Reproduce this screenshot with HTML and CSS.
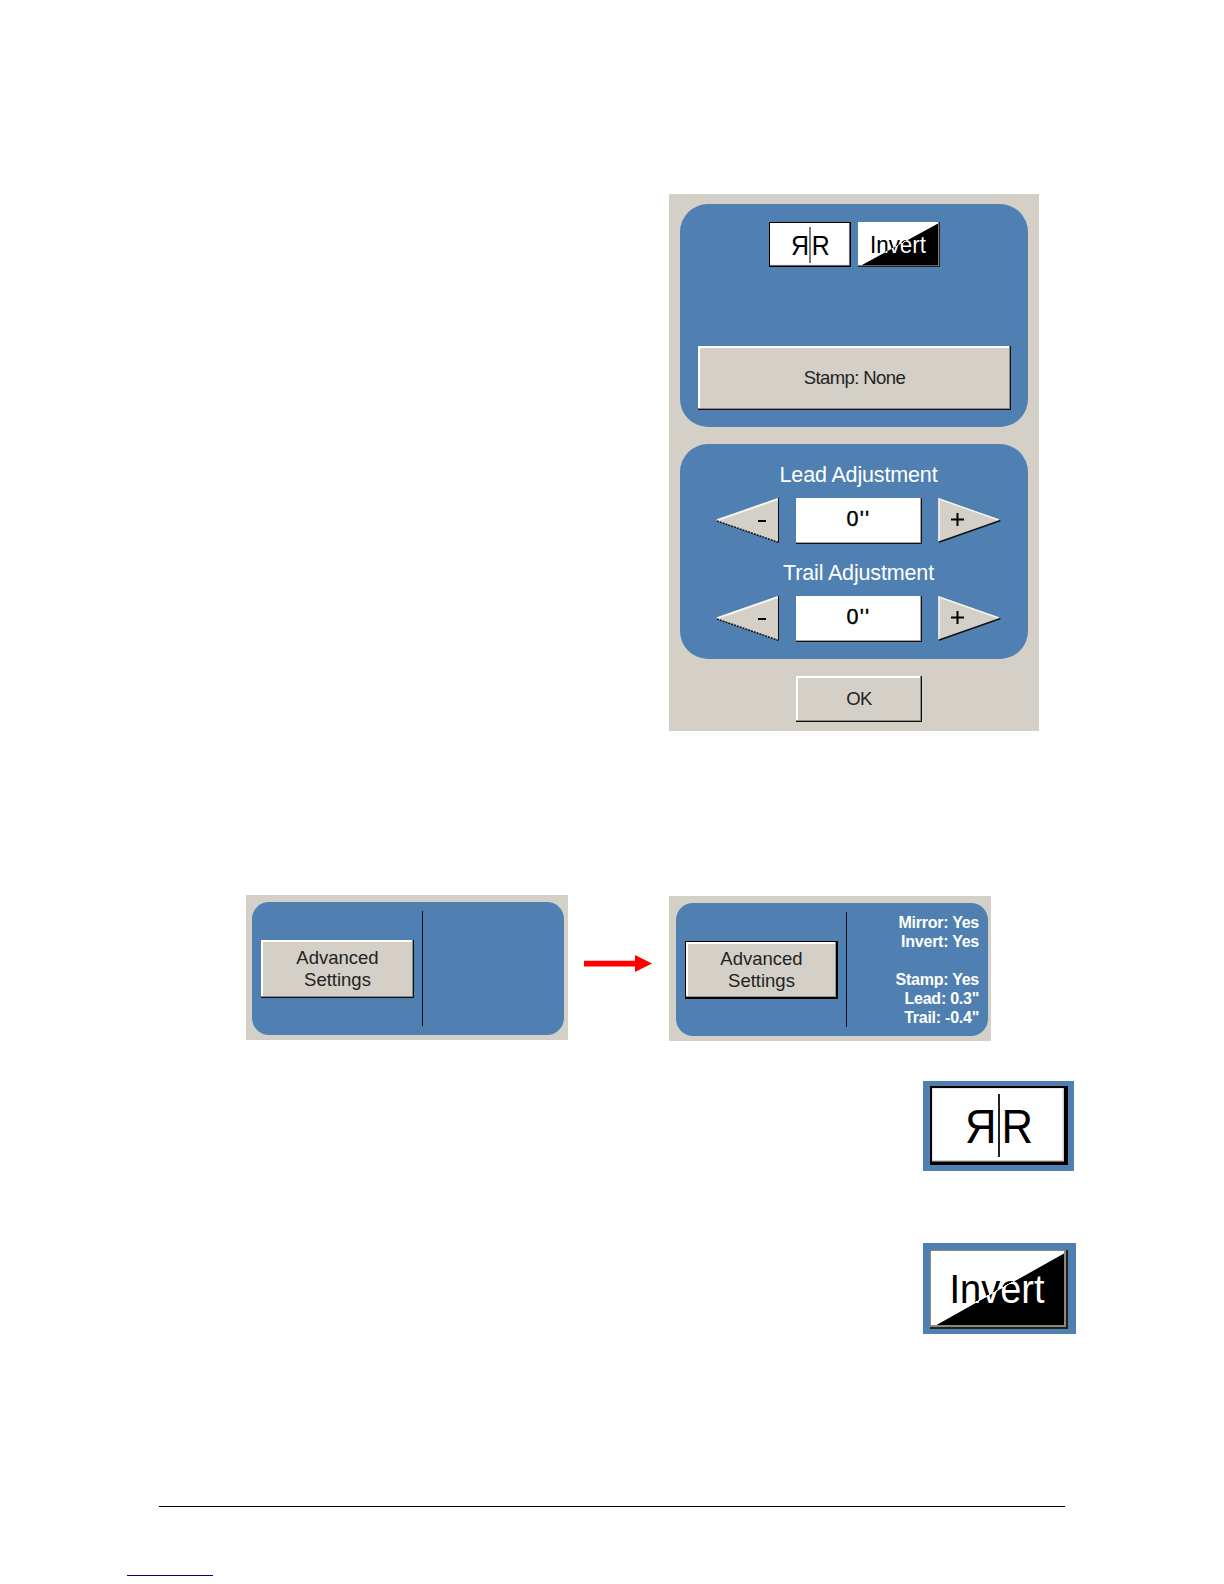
FILE: index.html
```
<!DOCTYPE html>
<html lang="en">
<head>
    <meta charset="UTF-8">
    <meta name="viewport" content="width=device-width, initial-scale=1.0">
    <title>Advanced Settings</title>
    <link rel="stylesheet" href="styles.css">
</head>
<body>
    <main class="page">
        <section class="dialog">
            <div class="panel options">
                <div class="toggles">
                    <svg class="toggle" viewBox="0 0 82 45">
                        <rect width="82" height="45" fill="#000"/>
                        <rect x="1" y="1" width="79.5" height="42.5" fill="#d4d0c8"/>
                        <rect x="1" y="1" width="78.8" height="41.7" fill="#fff"/>
                        <text x="42.7" y="32.6" font-size="27.5" textLength="18" lengthAdjust="spacingAndGlyphs">R</text>
                        <text transform="translate(82 0) scale(-1 1)" x="42" y="32.6" font-size="27.5" textLength="18" lengthAdjust="spacingAndGlyphs">R</text>
                        <rect x="40.4" y="5" width="1.2" height="36" fill="#222"/>
                    </svg>
                    <svg class="toggle" viewBox="0 0 82 45">
                        <defs>
                            <linearGradient id="split" gradientUnits="userSpaceOnUse" x1="30.1" y1="2.7" x2="51.9" y2="42.3">
                                <stop offset="0.5" stop-color="#000"/>
                                <stop offset="0.5" stop-color="#fff"/>
                            </linearGradient>
                        </defs>
                        <rect width="82" height="45" fill="#222"/>
                        <rect width="81" height="44" fill="#857f78"/>
                        <rect width="80" height="43" fill="#fff"/>
                        <path d="M3.5 43.3L80 1.5V43.3Z" fill="#000"/>
                        <text x="12" y="31.2" font-size="23.5" textLength="56" lengthAdjust="spacingAndGlyphs" fill="url(#split)">Invert</text>
                    </svg>
                </div>
                <button class="btn stamp">Stamp: None</button>
            </div>

            <div class="panel adjustments">
                <h3>Lead Adjustment</h3>
                <div class="stepper">
                    <svg class="arrow" viewBox="0 0 63 45">
                        <path d="M0 22.5L62.5 0V44.5Z" fill="#d4d0c8"/>
                        <path d="M1 22.2L62 1" stroke="#f5f3ee" stroke-width="2"/>
                        <path d="M1 23L62.3 44.3" stroke="#111" stroke-width="1.5" stroke-dasharray="2 1"/>
                        <path d="M62.5 0V44.5" stroke="#111"/>
                        <path d="M42 23H50" stroke="#000" stroke-width="2"/>
                    </svg>
                    <div class="value">0''</div>
                    <svg class="arrow" viewBox="0 0 63 45">
                        <path d="M0.5 0L63 22.5L0.5 44.5Z" fill="#d4d0c8"/>
                        <path d="M1 44V1L61 22" fill="none" stroke="#f5f3ee" stroke-width="1.5"/>
                        <path d="M0.5 44.2L62.5 22.5" stroke="#111" stroke-width="1.5"/>
                        <path d="M13 21.5H26M19.5 15V28" stroke="#000" stroke-width="2"/>
                    </svg>
                </div>
                <h3>Trail Adjustment</h3>
                <div class="stepper">
                    <svg class="arrow" viewBox="0 0 63 45">
                        <path d="M0 22.5L62.5 0V44.5Z" fill="#d4d0c8"/>
                        <path d="M1 22.2L62 1" stroke="#f5f3ee" stroke-width="2"/>
                        <path d="M1 23L62.3 44.3" stroke="#111" stroke-width="1.5" stroke-dasharray="2 1"/>
                        <path d="M62.5 0V44.5" stroke="#111"/>
                        <path d="M42 23H50" stroke="#000" stroke-width="2"/>
                    </svg>
                    <div class="value">0''</div>
                    <svg class="arrow" viewBox="0 0 63 45">
                        <path d="M0.5 0L63 22.5L0.5 44.5Z" fill="#d4d0c8"/>
                        <path d="M1 44V1L61 22" fill="none" stroke="#f5f3ee" stroke-width="1.5"/>
                        <path d="M0.5 44.2L62.5 22.5" stroke="#111" stroke-width="1.5"/>
                        <path d="M13 21.5H26M19.5 15V28" stroke="#000" stroke-width="2"/>
                    </svg>
                </div>
            </div>

            <button class="btn ok">OK</button>
        </section>

        <section class="summary">
            <div class="card">
                <div class="panel card-inner">
                    <button class="btn advanced">Advanced<br>Settings</button>
                    <div class="divider"></div>
                </div>
            </div>
            <svg class="red-arrow" viewBox="0 0 68 17">
                <path d="M0 5.8H51V0L68 8.5L51 17V11.4H0Z" fill="#f00"/>
            </svg>
            <div class="card changed">
                <div class="panel card-inner">
                    <button class="btn advanced active">Advanced<br>Settings</button>
                    <div class="divider"></div>
                    <p class="status">Mirror: Yes<br>Invert: Yes<br><br>Stamp: Yes<br>Lead: 0.3"<br>Trail: -0.4"</p>
                </div>
            </div>
        </section>

        <div class="sample sample-mirror">
            <svg viewBox="0 0 138 79">
                <rect width="138" height="79" fill="#000"/>
                <rect x="2" y="2" width="132" height="73.5" fill="#d4d0c8"/>
                <rect x="2.5" y="2.5" width="130" height="71.5" fill="#fff"/>
                <text x="71.5" y="56.7" font-size="48" textLength="31.5" lengthAdjust="spacingAndGlyphs">R</text>
                <text transform="translate(138 0) scale(-1 1)" x="71.5" y="56.7" font-size="48" textLength="31.5" lengthAdjust="spacingAndGlyphs">R</text>
                <rect x="68" y="8" width="2" height="63" fill="#222"/>
            </svg>
        </div>
        <div class="sample sample-invert">
            <svg viewBox="0 0 138 79">
                <defs>
                    <linearGradient id="split-large" gradientUnits="userSpaceOnUse" x1="51.2" y1="4.5" x2="88.8" y2="72.5">
                        <stop offset="0.5" stop-color="#000"/>
                        <stop offset="0.5" stop-color="#fff"/>
                    </linearGradient>
                </defs>
                <rect width="138" height="79" fill="#222"/>
                <rect width="136" height="77" fill="#8d877a"/>
                <rect x="1" y="1" width="133" height="74" fill="#fff"/>
                <path d="M6.5 75L134 3.5V75Z" fill="#000"/>
                <text x="19.5" y="53" font-size="40.5" textLength="95" lengthAdjust="spacingAndGlyphs" fill="url(#split-large)">Invert</text>
            </svg>
        </div>

        <hr class="footer-rule">
        <hr class="link-rule">
    </main>
</body>
</html>
```

FILE: styles.css
```
* {
    box-sizing: border-box;
}

body {
    margin: 0;
    background-color: #fff;
    font-family: "Liberation Sans", Arial, sans-serif;
    color: #111;
}

svg {
    display: block;
}

.page {
    display: flex;
    flex-direction: column;
    align-items: flex-start;
    width: 1224px;
    height: 1584px;
    padding-top: 194px;
    overflow: hidden;
}

.panel {
    background-color: #4f80b1;
}

.btn {
    font-family: inherit;
    font-size: 18.5px;
    color: #222;
    padding: 0;
    background-color: #d4d0c8;
    border: 0;
    box-shadow: inset -1px -1px #111, inset -2px -2px #8f8b84, inset 2px 2px #fff;
}

/* settings dialog */
.dialog {
    display: flex;
    flex-direction: column;
    width: 370px;
    height: 537px;
    margin-left: 669px;
    padding: 10px 11px 9px;
    background-color: #d4d0c8;
}

.dialog .panel {
    border-radius: 28px;
}

.options {
    height: 223px;
    padding: 18px 17px 0 18px;
}

.toggles {
    display: flex;
    gap: 7px;
    padding-left: 71px;
}

.toggle {
    width: 82px;
    height: 45px;
}

.stamp {
    width: 313px;
    height: 64px;
    margin-top: 79px;
    letter-spacing: -0.6px;
}

.adjustments {
    height: 215px;
    margin-top: 17px;
    padding: 18px 27px 0 36px;
}

h3 {
    height: 36px;
    margin: 0;
    font-size: 21.5px;
    font-weight: normal;
    line-height: 26px;
    letter-spacing: -0.15px;
    text-align: center;
    color: #fff;
}

.stepper {
    display: flex;
    justify-content: space-between;
    margin-bottom: 16px;
}

.arrow {
    width: 63px;
    height: 45px;
}

.value {
    width: 126px;
    height: 46px;
    background-color: #fff;
    box-shadow: inset -1px -1px #111, inset -2px -2px #aaa69f;
    font-size: 21.5px;
    line-height: 42px;
    letter-spacing: 1.2px;
    text-align: center;
    color: #000;
    -webkit-text-stroke: 0.4px #000;
}

.ok {
    width: 126px;
    height: 46px;
    margin: 17px 0 0 116px;
    letter-spacing: -0.7px;
}

/* before / after cards */
.summary {
    display: flex;
    align-items: flex-start;
    margin: 164px 0 0 246px;
}

.card {
    width: 322px;
    height: 145px;
    padding: 7px 4px 5px 6px;
    background-color: #d4d0c8;
}

.card-inner {
    display: flex;
    height: 133px;
    padding: 9px 9px 0 9px;
    border-radius: 17px;
}

.advanced {
    width: 153px;
    height: 58px;
    margin-top: 29px;
    line-height: 22px;
}

.divider {
    width: 1px;
    height: 115px;
    margin-left: 8px;
    background-color: #111;
}

.red-arrow {
    width: 68px;
    height: 17px;
    margin: 60px 17px 0 16px;
}

.changed {
    margin-top: 1px;
    padding-left: 7px;
    padding-right: 3px;
}

.active {
    box-shadow: inset 1px 1px #000, inset -2px -2px #000, inset -3px -3px #96928b, inset 3px 3px #fff;
}

.status {
    flex: 1;
    margin: 1px 0 0;
    font-size: 16px;
    font-weight: bold;
    line-height: 19px;
    letter-spacing: -0.25px;
    text-align: right;
    color: #fff;
}

/* enlarged buttons */
.sample {
    width: 151px;
    height: 90px;
    margin-left: 923px;
    padding: 5px 0 0 7px;
    background-color: #4f80b1;
}

.sample svg {
    width: 138px;
    height: 79px;
}

.sample-mirror {
    margin-top: 40px;
}

.sample-invert {
    width: 153px;
    height: 91px;
    margin-top: 72px;
    padding-top: 7px;
}

/* page bottom lines */
.footer-rule {
    width: 906px;
    height: 1px;
    margin: 172px 0 0 159px;
    border: 0;
    background-color: #000;
}

.link-rule {
    width: 86px;
    height: 1px;
    margin: 68px 0 0 127px;
    border: 0;
    background-color: #000080;
}
```
